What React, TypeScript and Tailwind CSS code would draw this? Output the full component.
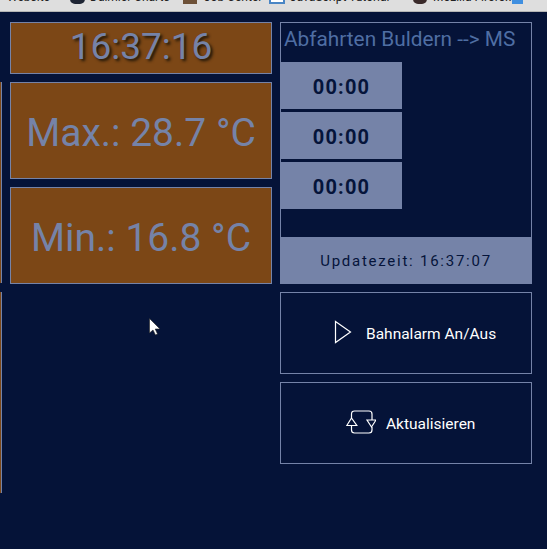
const boxFont = "[font-family:Roboto,sans-serif]";

function TempBox({ label }: { label: string }) {
  return (
    <div className="flex h-[97px] items-center justify-center border border-[#7583a8] bg-[#7c4716] pt-[6px] text-[39px] text-[#7583a8]">
      {label}
    </div>
  );
}

function TimeRow() {
  return (
    <div className="flex h-[47px] w-[121px] items-center justify-center bg-[#7583a8] pt-[3px] text-[20px] font-bold tracking-[1.2px] text-[#05143a]">
      00:00
    </div>
  );
}

function Bookmark({ text, width }: { text: string; width: string }) {
  return <span className={`shrink-0 whitespace-nowrap ${width}`}>{text}</span>;
}

export default function App() {
  return (
    <div className={`relative flex h-[549px] w-[547px] flex-col overflow-hidden bg-[#051338] ${boxFont}`}>
      {/* browser bookmarks bar, cut off by the top of the window */}
      <div className="h-[12px] shrink-0 overflow-hidden border-b border-[#b5b5b5] bg-[#dedede] text-[12px] leading-[12px] text-[#222]">
        <div className="-mt-[9px] flex items-start pl-[7px]">
          <Bookmark text="Website" width="w-[63px]" />
          <div className="mt-[8px] h-[5px] w-[15px] shrink-0 rounded-b-full bg-[#1d2433]" />
          <Bookmark text="Daimler Charts" width="ml-[5px] w-[93px]" />
          <div className="mt-[8px] h-[5px] w-[14px] shrink-0 bg-[#6d5138]" />
          <Bookmark text="Job Center" width="ml-[7px] w-[65px]" />
          <div className="mt-[8px] h-[5px] w-[16px] shrink-0 border-x-2 border-b-2 border-[#4a86c5] bg-white" />
          <Bookmark text="JavaScript Tutorial" width="ml-[5px] w-[123px]" />
          <div className="mt-[8px] h-[5px] w-[14px] shrink-0 rounded-b-full bg-[#3a2a2a]" />
          <Bookmark text="Mozilla Firefox" width="ml-[6px] w-[79px]" />
          <div className="mt-[8px] h-[5px] w-[11px] shrink-0 bg-[#3f8fe0]" />
        </div>
      </div>

      <div className="flex flex-1 pt-[10px]">
        <div className="flex w-[2px] flex-col gap-[9px] pt-[60px]">
          <div className="h-[201px] border-r border-[#7583a8] bg-[#7c4716]" />
          <div className="h-[201px] border-r border-[#7583a8] bg-[#7c4716]" />
        </div>

        <div className="ml-[8px] flex w-[262px] flex-col gap-[8px]">
          <div className="flex h-[52px] items-center justify-center border border-[#7583a8] bg-[#7c4716] pb-[2px] text-[37px] text-[#7583a8] [text-shadow:2px_2px_3px_#1c1408]">
            16:37:16
          </div>
          <TempBox label="Max.: 28.7 °C" />
          <TempBox label="Min.: 16.8 °C" />
        </div>

        <div className="ml-[8px] flex w-[252px] flex-col gap-[8px]">
          <div className="flex h-[262px] flex-col border border-[#7583a8]">
            <div className="flex h-[39px] items-center pb-[5px] pl-[3px] text-[20.8px] text-[#4f6ea3]">
              Abfahrten Buldern --&gt; MS
            </div>
            <div className="flex flex-col gap-[3px]">
              <TimeRow />
              <TimeRow />
              <TimeRow />
            </div>
            <div className="-mx-px -mb-px mt-auto flex h-[47px] items-center justify-center bg-[#7583a8] pt-[1px] text-[15px] tracking-[1.75px] text-[#05143a]">
              Updatezeit: 16:37:07
            </div>
          </div>

          <button type="button" className="flex h-[82px] items-center border border-[#7583a8] pl-[53px] text-[15.5px] text-white">
            <svg className="mb-[2px]" width="18" height="24" viewBox="0 0 18 24" fill="none" stroke="white" strokeWidth="1.2">
              <path d="M1.5 1.5 L16.5 12 L1.5 22.5 Z" />
            </svg>
            <span className="ml-[14px] pt-[3px]">Bahnalarm An/Aus</span>
          </button>

          <button type="button" className="flex h-[82px] items-center border border-[#7583a8] pl-[65px] text-[15.5px] text-white">
            <svg className="mb-[2px]" width="30" height="24" viewBox="0 0 30 24" fill="none" stroke="white" strokeWidth="1.2">
              <path d="M5.5 8 V4 Q5.5 1 8.5 1 H23 Q26 1 26 4 V10" />
              <path d="M5.5 15.5 V20 Q5.5 23 8.5 23 H23 Q26 23 26 20 V17" />
              <path d="M0.8 15.5 L5.5 8 L10.8 15.5 Z" />
              <path d="M21 10 H30 L25.5 17 Z" />
            </svg>
            <span className="ml-[10px] pt-[3px]">Aktualisieren</span>
          </button>
        </div>
      </div>

      {/* mouse pointer */}
      <svg className="absolute left-[149px] top-[318px]" width="12" height="18" viewBox="0 0 12 18">
        <path d="M0.5 0.5 V15 L4 12 L6.5 17 L8.5 16 L6.2 11 H11 Z" fill="white" stroke="#222" strokeWidth="0.6" />
      </svg>
    </div>
  );
}
